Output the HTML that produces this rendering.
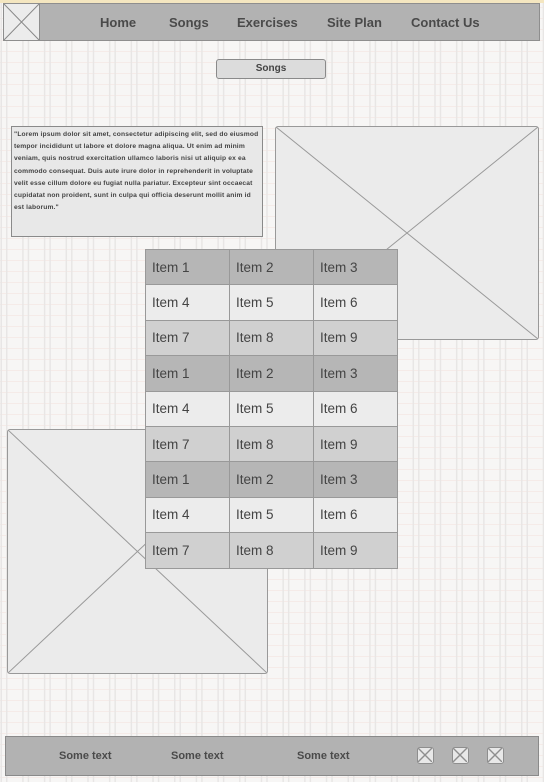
<!DOCTYPE html>
<html><head><meta charset="utf-8"><style>
*{margin:0;padding:0;box-sizing:border-box}
body{width:544px;height:782px;position:relative;overflow:hidden;font-family:"Liberation Sans",sans-serif;
background-color:#f7f6f5;
background-image:
linear-gradient(90deg,#e8e6e5 1.5px,transparent 1.5px),
linear-gradient(90deg,#e8e6e5 1.5px,transparent 1.5px),
linear-gradient(0deg,#f5ebe8 1px,transparent 1px);
background-size:21.7px 100%,21.7px 100%,100% 11px;
background-position:0.5px 0,6px 0,0 8px;}
.top{position:absolute;left:0;top:0;width:544px;height:3px;background:#f4e6c0}
.nav{position:absolute;left:3px;top:3px;width:537px;height:38px;background:#b2b2b2;border:1px solid #8e8e8e}
.nav span{position:absolute;top:11px;font-size:13px;font-weight:bold;color:#4a4a4a}
.ph{position:absolute;background:#ebebeb;border:1.5px solid #999}
.ph svg{position:absolute;left:0;top:0;width:100%;height:100%}
.btn{position:absolute;left:216px;top:59px;width:110px;height:20px;background:#dcdcdc;border:1.5px solid #8a8a8a;border-radius:3px;font-size:10px;font-weight:bold;text-align:center;line-height:17px;color:#444}
.txt{position:absolute;left:11px;top:126px;width:252px;height:111px;background:#e8e8e8;border:1.5px solid #8a8a8a;padding:2px 2px;font-size:6.7px;line-height:12.2px;color:#444;font-weight:bold;letter-spacing:0.15px}
table{position:absolute;left:145px;top:249px;border-collapse:collapse;width:253px}
td{width:84px;height:35.4px;border:1px solid #999;font-size:13.5px;color:#444;padding-left:6px}
.a td{background:#b6b6b6}.b td{background:#ececec}.c td{background:#d0d0d0}
.foot{position:absolute;left:5px;top:736px;width:534px;height:40px;background:#b2b2b2;border:1px solid #8a8a8a}
.foot span{position:absolute;top:13px;font-size:11px;font-weight:bold;color:#4a4a4a}
.ic{position:absolute;top:10px;width:17px;height:17px;border:1.5px solid #8e8e8e;border-radius:3px;background:#e8e8e8}
</style></head><body>
<div class="top"></div>
<div class="nav">
<div class="ph" style="left:-1px;top:-1px;width:37px;height:38px;background:#ececec;border-color:#8e8e8e"><svg viewBox="0 0 10 10" preserveAspectRatio="none"><path d="M0 0L10 10M10 0L0 10" stroke="#888" stroke-width="1" vector-effect="non-scaling-stroke"/></svg></div>
<span style="left:96px">Home</span><span style="left:165px">Songs</span><span style="left:233px">Exercises</span><span style="left:323px">Site Plan</span><span style="left:407px">Contact Us</span>
</div>
<div class="btn">Songs</div>
<div class="txt">"Lorem ipsum dolor sit amet, consectetur adipiscing elit, sed do eiusmod tempor incididunt ut labore et dolore magna aliqua. Ut enim ad minim veniam, quis nostrud exercitation ullamco laboris nisi ut aliquip ex ea commodo consequat. Duis aute irure dolor in reprehenderit in voluptate velit esse cillum dolore eu fugiat nulla pariatur. Excepteur sint occaecat cupidatat non proident, sunt in culpa qui officia deserunt mollit anim id est laborum."</div>
<div class="ph" style="left:275px;top:126px;width:264px;height:214px;border-radius:3px"><svg viewBox="0 0 10 10" preserveAspectRatio="none"><path d="M0 0L10 10M10 0L0 10" stroke="#999" stroke-width="1" vector-effect="non-scaling-stroke"/></svg></div>
<div class="ph" style="left:7px;top:429px;width:261px;height:245px;border-radius:3px"><svg viewBox="0 0 10 10" preserveAspectRatio="none"><path d="M0 0L10 10M10 0L0 10" stroke="#999" stroke-width="1" vector-effect="non-scaling-stroke"/></svg></div>
<table>
<tr class="a"><td>Item 1</td><td>Item 2</td><td>Item 3</td></tr>
<tr class="b"><td>Item 4</td><td>Item 5</td><td>Item 6</td></tr>
<tr class="c"><td>Item 7</td><td>Item 8</td><td>Item 9</td></tr>
<tr class="a"><td>Item 1</td><td>Item 2</td><td>Item 3</td></tr>
<tr class="b"><td>Item 4</td><td>Item 5</td><td>Item 6</td></tr>
<tr class="c"><td>Item 7</td><td>Item 8</td><td>Item 9</td></tr>
<tr class="a"><td>Item 1</td><td>Item 2</td><td>Item 3</td></tr>
<tr class="b"><td>Item 4</td><td>Item 5</td><td>Item 6</td></tr>
<tr class="c"><td>Item 7</td><td>Item 8</td><td>Item 9</td></tr>
</table>
<div class="foot">
<span style="left:53px">Some text</span><span style="left:165px">Some text</span><span style="left:291px">Some text</span>
<div class="ic" style="left:411px"><svg viewBox="0 0 10 10" width="14" height="14"><path d="M0 0L10 10M10 0L0 10" stroke="#8e8e8e" stroke-width="1"/></svg></div>
<div class="ic" style="left:446px"><svg viewBox="0 0 10 10" width="14" height="14"><path d="M0 0L10 10M10 0L0 10" stroke="#8e8e8e" stroke-width="1"/></svg></div>
<div class="ic" style="left:481px"><svg viewBox="0 0 10 10" width="14" height="14"><path d="M0 0L10 10M10 0L0 10" stroke="#8e8e8e" stroke-width="1"/></svg></div>
</div>
</body></html>
